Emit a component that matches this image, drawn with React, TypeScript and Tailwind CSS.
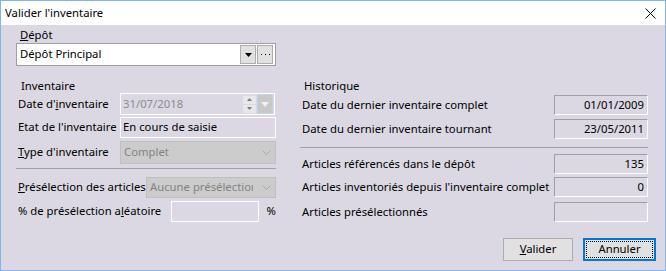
import React from "react";

const F = { fontFamily: '"Noto Sans", "Open Sans", sans-serif' };

function Chevron() {
  return (
    <svg width="9" height="5" viewBox="0 0 9 5" className="shrink-0">
      <path d="M0.5 0.5 L4.5 4.5 L8.5 0.5" fill="none" stroke="#a8a8a8" strokeWidth="1" />
    </svg>
  );
}

function DisabledCombo({ text, w, tw }: { text: string; w: string; tw: string }) {
  return (
    <div className={`${w} h-full bg-[#cccccc] border border-[#bfbfbf] flex items-center pl-[3px] pr-[4px] overflow-hidden`}>
      <div className="flex-1 min-w-0">
        <div className={`${tw} text-[#838383] whitespace-nowrap overflow-hidden`}>{text}</div>
      </div>
      <Chevron />
    </div>
  );
}

function SunkenField({ value }: { value?: string }) {
  return (
    <div className="w-[94px] h-full border-t border-l border-[#a0a0a0] border-r-white border-b-white border-r border-b flex items-center justify-end pr-[3px] text-black">
      {value}
    </div>
  );
}

export default function App() {
  return (
    <div
      className="w-[666px] h-[271px] border border-[#7db7f0] bg-[#dbd8e3] flex flex-col text-[11.3px] text-black overflow-hidden"
      style={F}
    >
      {/* Title bar */}
      <div className="h-[24px] bg-white flex items-center justify-between pl-[4px] pr-[9px] shrink-0">
        <span className="leading-none">Valider l'inventaire</span>
        <svg width="11" height="11" viewBox="0 0 11 11">
          <path d="M0.5 0.5 L10.5 10.5 M10.5 0.5 L0.5 10.5" stroke="#000" strokeWidth="1" />
        </svg>
      </div>

      {/* Body */}
      <div className="flex-1 flex flex-col pl-[15px] pr-[9px]">
        <div className="mt-[3px] h-[15px] flex items-center pl-[4px]">
          <span><span className="underline">D</span>épôt</span>
        </div>
        <div className="w-[260px] h-[23px] bg-white border border-[#a0a0a0] flex items-center pl-[3px] pr-[2px]">
          <span className="flex-1">Dépôt Principal</span>
          <div className="w-[16px] h-[19px] bg-[#e1e1e1] border border-[#adadad] flex items-center justify-center">
            <svg width="7" height="4" viewBox="0 0 7 4"><path d="M0 0 H7 L3.5 4 Z" fill="#000" /></svg>
          </div>
          <div className="ml-[1px] w-[16px] h-[19px] bg-[#e1e1e1] border border-[#adadad] flex items-center justify-center">
            <svg width="9" height="2" viewBox="0 0 9 2">
              <rect x="0" y="0" width="1" height="1" fill="#000" />
              <rect x="4" y="0" width="1" height="1" fill="#000" />
              <rect x="8" y="0" width="1" height="1" fill="#000" />
            </svg>
          </div>
        </div>

        <div className="flex">
          {/* Left column */}
          <div className="w-[260px] flex flex-col">
            <div className="mt-[14px] h-[13px] flex items-center pl-[5px]">Inventaire</div>
            <div className="h-[22px] flex items-center">
              <div className="w-[104px] pl-[2px] whitespace-nowrap">Date d'<span className="underline">i</span>nventaire</div>
              <div className="w-[155px] h-full border border-white flex items-center pl-[2px] pr-[1px]">
                <span className="flex-1 text-[#8d8d8d]">31/07/2018</span>
                <div className="flex flex-col gap-[1px] mr-[1px]">
                  <div className="w-[13px] h-[8px] bg-[#e8e8e8] flex items-center justify-center">
                    <svg width="5" height="3" viewBox="0 0 5 3"><path d="M0 3 H5 L2.5 0 Z" fill="#7a7a7a" /></svg>
                  </div>
                  <div className="w-[13px] h-[8px] bg-[#e8e8e8] flex items-center justify-center">
                    <svg width="5" height="3" viewBox="0 0 5 3"><path d="M0 0 H5 L2.5 3 Z" fill="#7a7a7a" /></svg>
                  </div>
                </div>
                <div className="w-[16px] h-[20px] bg-[#c8c8c8] border border-[#b9d5ee] flex items-center justify-center">
                  <svg width="8" height="5" viewBox="0 0 8 5"><path d="M0 0 H8 L4 5 Z" fill="#f2f2f2" /></svg>
                </div>
              </div>
            </div>
            <div className="mt-[2px] h-[21px] flex items-center">
              <div className="w-[104px] pl-[2px] whitespace-nowrap">Etat de l'inventaire</div>
              <div className="w-[156px] h-full border border-white flex items-center pl-[2px]">En cours de saisie</div>
            </div>
            <div className="mt-[3px] h-[23px] flex items-center">
              <div className="w-[104px] pl-[2px] whitespace-nowrap"><span className="underline">T</span>ype d'inventaire</div>
              <DisabledCombo text="Complet" w="w-[156px]" tw="w-full" />
            </div>
            <div className="mt-[4px] h-[1px] bg-[#a0a0a0]" />
            <div className="mt-[8px] h-[21px] flex items-center">
              <div className="w-[130px] pl-[2px] whitespace-nowrap"><span className="underline">P</span>résélection des articles</div>
              <DisabledCombo text="Aucune présélection" w="w-[130px]" tw="w-[103px]" />
            </div>
            <div className="mt-[3px] h-[21px] flex items-center">
              <div className="w-[156px] pl-[2px] whitespace-nowrap">% de présélection a<span className="underline">l</span>éatoire</div>
              <div className="w-[88px] h-full border border-white" />
              <div className="ml-[8px]">%</div>
            </div>
          </div>

          {/* Right column */}
          <div className="ml-[24px] w-[348px] flex flex-col">
            <div className="mt-[14px] h-[13px] flex items-center pl-[4px]">Historique</div>
            <div className="mt-[2px] h-[20px] flex items-center">
              <div className="flex-1 pl-[2px] whitespace-nowrap">Date du dernier inventaire complet</div>
              <SunkenField value="01/01/2009" />
            </div>
            <div className="mt-[4px] h-[20px] flex items-center">
              <div className="flex-1 pl-[2px] whitespace-nowrap">Date du dernier inventaire tournant</div>
              <SunkenField value="23/05/2011" />
            </div>
            <div className="mt-[8px] h-[1px] bg-[#a0a0a0]" />
            <div className="mt-[6px] h-[20px] flex items-center">
              <div className="flex-1 pl-[2px] whitespace-nowrap">Articles référencés dans le dépôt</div>
              <SunkenField value="135" />
            </div>
            <div className="mt-[3px] h-[20px] flex items-center">
              <div className="flex-1 pl-[2px] whitespace-nowrap">Articles inventoriés depuis l'inventaire complet</div>
              <SunkenField value="0" />
            </div>
            <div className="mt-[5px] h-[20px] flex items-center">
              <div className="flex-1 pl-[2px] whitespace-nowrap">Articles présélectionnés</div>
              <SunkenField />
            </div>
          </div>
        </div>

        {/* Buttons */}
        <div className="mt-[16px] flex justify-end gap-[10px]">
          <div className="w-[70px] h-[23px] bg-[#e1e1e1] border border-[#adadad] flex items-center justify-center">
            <span><span className="underline">V</span>alider</span>
          </div>
          <div className="w-[73px] h-[23px] bg-[#e1e1e1] border-2 border-[#0078d7] p-[1px]">
            <div className="w-full h-full border border-dotted border-black flex items-center justify-center">
              Annuler
            </div>
          </div>
        </div>
      </div>
    </div>
  );
}
